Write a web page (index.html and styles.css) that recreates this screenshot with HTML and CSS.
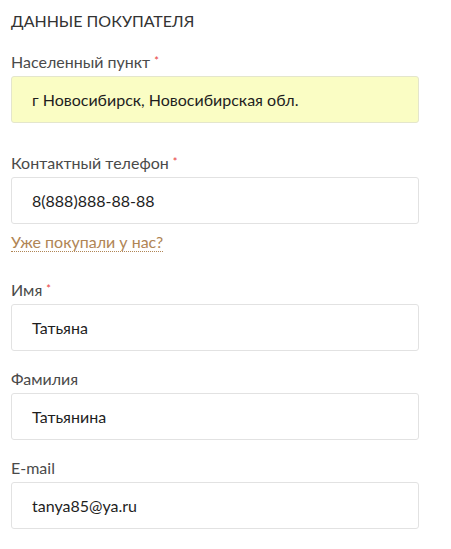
FILE: index.html
```html
<!DOCTYPE html>
<html lang="ru">
<head>
<meta charset="utf-8">
<title>Данные покупателя</title>
<link rel="stylesheet" href="styles.css">
</head>
<body>
<div class="form">
  <h2 class="title">Данные покупателя</h2>
  <div class="field field-first">
    <label class="label">Населенный пункт<span class="req">*</span></label>
    <div class="input input-filled">г Новосибирск, Новосибирская обл.</div>
  </div>
  <div class="field field-phone">
    <label class="label">Контактный телефон<span class="req">*</span></label>
    <div class="input">8(888)888-88-88</div>
    <a class="link" href="#">Уже покупали у нас?</a>
  </div>
  <div class="field">
    <label class="label">Имя<span class="req">*</span></label>
    <div class="input">Татьяна</div>
  </div>
  <div class="field">
    <label class="label">Фамилия</label>
    <div class="input">Татьянина</div>
  </div>
  <div class="field">
    <label class="label">E-mail</label>
    <div class="input">tanya85@ya.ru</div>
  </div>
</div>
</body>
</html>
```
FILE: styles.css
```css
html, body {
  margin: 0;
  padding: 0;
  background: #ffffff;
}
body {
  font-family: Lato, "Open Sans", sans-serif;
  font-size: 16px;
  color: #222;
}
.form {
  padding: 12px 0 0 11px;
  width: 408px;
}
.title {
  margin: 0 0 23px 0;
  font-size: 16px;
  font-weight: 400;
  line-height: 18px;
  text-transform: uppercase;
  color: #333;
}
.field {
  display: flex;
  flex-direction: column;
  align-items: flex-start;
  margin-bottom: 19px;
}
.field-first {
  margin-bottom: 31px;
}
.field-phone {
  margin-bottom: 29px;
}
.label {
  display: block;
  font-size: 16px;
  line-height: 18px;
  color: #4a4a4a;
  margin-bottom: 5px;
}
.req {
  color: #e8413c;
  font-size: 11px;
  margin-left: 4px;
  vertical-align: 3px;
  line-height: 0;
}
.input {
  box-sizing: border-box;
  width: 408px;
  height: 47px;
  padding: 0 20px;
  display: flex;
  align-items: center;
  border: 1px solid #e2e2e2;
  border-radius: 3px;
  background: #fff;
  font-family: Lato, "Open Sans", sans-serif;
  font-size: 16px;
  line-height: 18px;
  color: #1e1e1e;
}
.input-filled {
  background: #fafdc4;
  border-color: #e4e6cc;
}
.link {
  margin-top: 9px;
  font-size: 16px;
  line-height: 18px;
  color: #b08555;
  text-decoration: none;
  border-bottom: 1px dotted #b08555;
}
```
